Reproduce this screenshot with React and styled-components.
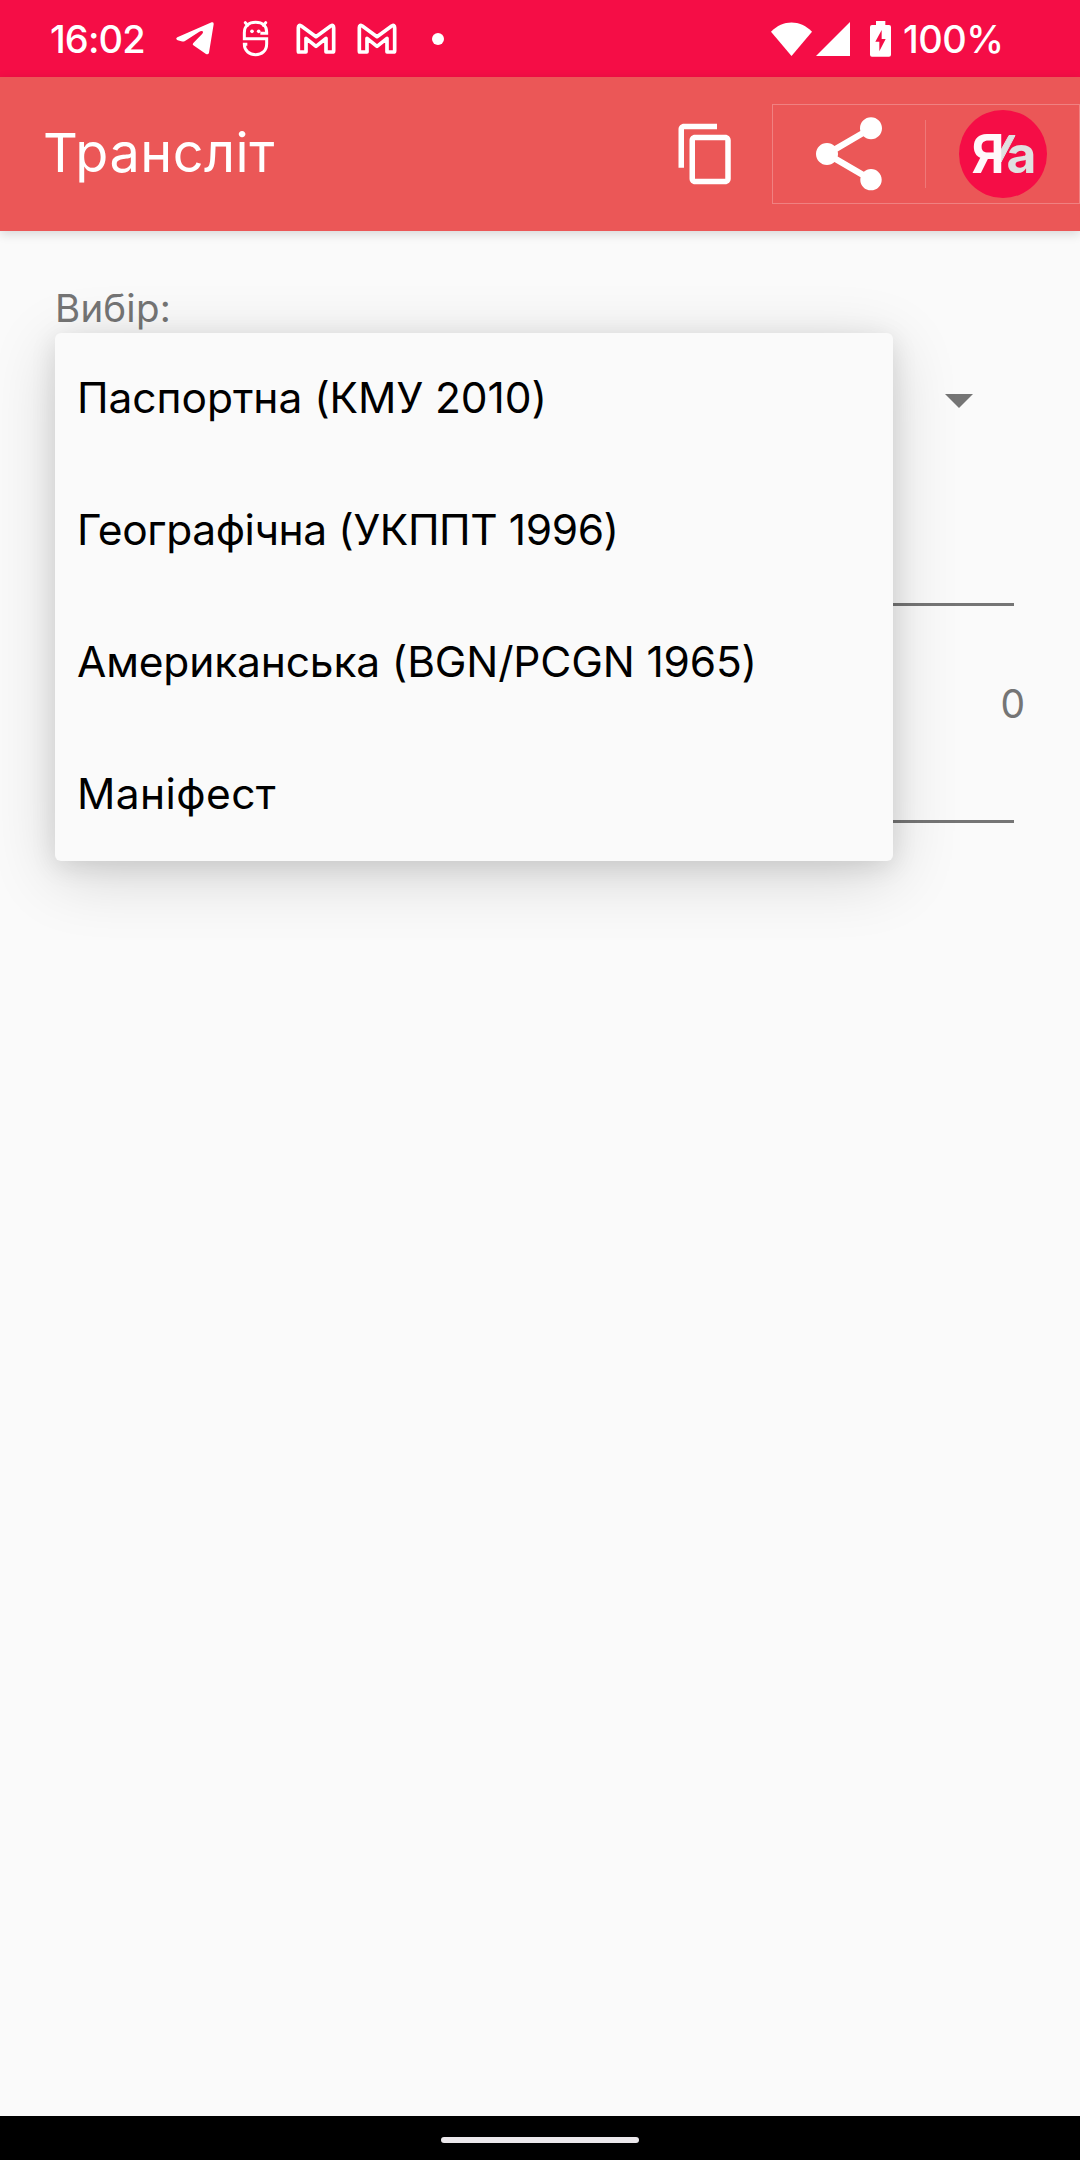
import React from "react";
import styled, { createGlobalStyle } from "styled-components";

const GlobalStyle = createGlobalStyle`
  * { box-sizing: border-box; }
  body { margin: 0; background: #fafafa; font-family: Inter, Roboto, sans-serif; }
`;

const Screen = styled.div`
  display: flex;
  flex-direction: column;
  width: 1080px;
  height: 2160px;
  background: #fafafa;
  overflow: hidden;
`;

const StatusBar = styled.header`
  display: flex;
  align-items: center;
  flex: none;
  height: 77px;
  padding: 0 79px 0 50px;
  background: #f50d46;
  color: #fff;
`;

const StatusText = styled.span`
  width: ${(p) => p.$width}px;
  margin-left: ${(p) => p.$gap || 0}px;
  font-size: 38px;
  line-height: 46px;
  font-weight: 500;
  letter-spacing: ${(p) => p.$spacing || 0}px;
  white-space: nowrap;
`;

const Icon = styled.svg`
  display: block;
  flex: none;
  width: ${(p) => p.$w}px;
  height: ${(p) => p.$h}px;
  margin-left: ${(p) => p.$gap || 0}px;
  fill: #fff;
  overflow: visible;
`;

const Spacer = styled.div`
  flex: 1;
`;

const Toolbar = styled.div`
  display: flex;
  align-items: center;
  flex: none;
  height: 154px;
  padding-left: 43px;
  background: #eb5757;
  color: #fff;
  box-shadow: 0 3px 10px rgba(0, 0, 0, 0.14);
`;

const Title = styled.h1`
  margin: 0;
  padding-bottom: 2px;
  font-size: 54px;
  line-height: 64px;
  font-weight: 400;
  letter-spacing: 0.5px;
`;

const ShareGroup = styled.div`
  display: flex;
  align-items: center;
  width: 308px;
  height: 100px;
  margin-left: 33px;
  border: 1px solid rgba(255, 255, 255, 0.25);
`;

const ShareButton = styled.div`
  display: flex;
  align-items: center;
  justify-content: center;
  width: 152px;
`;

const Divider = styled.div`
  width: 1px;
  height: 68px;
  background: rgba(255, 255, 255, 0.2);
`;

const Content = styled.main`
  display: flex;
  flex-direction: column;
  flex: 1;
  padding: 55px 55px 0;
`;

const Label = styled.div`
  height: 47px;
  font-size: 38.5px;
  line-height: 45px;
  letter-spacing: 0.2px;
  color: #757575;
`;

const Select = styled.div`
  position: relative;
  display: flex;
  align-items: center;
  justify-content: flex-end;
  height: 132px;
  padding: 3px 52px 0 0;
`;

const Menu = styled.ul`
  position: absolute;
  top: 0;
  left: 0;
  width: 838px;
  margin: 0;
  padding: 0;
  list-style: none;
  background: #fafafa;
  border-radius: 6px;
  box-shadow: 0 15px 66px rgba(0, 0, 0, 0.16), 0 5px 26px rgba(0, 0, 0, 0.1);
`;

const MenuItem = styled.li`
  display: flex;
  align-items: center;
  height: 132px;
  padding: 0 22px 3px;
  font-size: 42.5px;
  letter-spacing: ${(p) => p.$spacing}px;
  color: #000;
  white-space: nowrap;
`;

const Field = styled.div`
  height: ${(p) => p.$h}px;
  margin: 0 11px;
  border-bottom: 3px solid #757575;
`;

const Counter = styled.div`
  align-self: flex-end;
  height: 50px;
  margin-top: 73px;
  margin-bottom: 1px;
  font-size: 39px;
  line-height: 50px;
  color: #757575;
`;

const NavBar = styled.footer`
  display: flex;
  align-items: center;
  justify-content: center;
  flex: none;
  height: 44px;
  padding-top: 4px;
  background: #000;
`;

const NavPill = styled.div`
  width: 198px;
  height: 6px;
  border-radius: 3px;
  background: #ebe8ec;
`;

const schemes = [
  { name: "Паспортна (КМУ 2010)", spacing: -0.05 },
  { name: "Географічна (УКППТ 1996)", spacing: -0.4 },
  { name: "Американська (BGN/PCGN 1965)", spacing: -0.16 },
  { name: "Маніфест", spacing: 0.4 },
];

function GmailIcon({ gap }) {
  return (
    <Icon $w={38} $h={30} $gap={gap} viewBox="0 0 114 90">
      <path
        d="M5 84H27V43L57 67L87 43V84H106Q110 84 110 80V11Q110 1 101 6L57 38L13 6Q4 1 4 11V80Q4 84 5 84Z"
        fill="none"
        stroke="#fff"
        strokeWidth="11"
        strokeLinejoin="round"
      />
    </Icon>
  );
}

function NotificationIcons() {
  return (
    <>
      <Icon $w={38} $h={33} viewBox="0 0 114 99">
        <path d="M107 1Q114 -1 113 7L99 92Q97 99 90 96L52 70Q48 67 52 63L79 35Q83 31 80 28Q76 25 70 29L27 57Q22 60 16 58L5 55Q-3 51 4 46Z" />
      </Icon>
      <Icon $w={25} $h={35} $gap={29} viewBox="0 0 75 105">
        <g fill="none" stroke="#fff" strokeWidth="9">
          <path d="M52 37H71V33C71 15 59 4 38 4S4 15 4 35V53H71V68C71 90 56 101 38 101S4 90 4 70H13" />
          <path d="M7 5L14 13M68 5L61 13" strokeLinecap="round" />
        </g>
        <circle cx="27" cy="31" r="5.500" />
        <circle cx="47" cy="31" r="5.500" />
      </Icon>
      <GmailIcon gap={29} />
      <GmailIcon gap={23} />
      <Icon $w={12} $h={12} $gap={36} viewBox="0 0 12 12">
        <circle cx="6" cy="6" r="6" />
      </Icon>
    </>
  );
}

function SystemIcons() {
  return (
    <>
      <Icon $w={41} $h={34} viewBox="0 0 123 102">
        <path d="M0 29C36 -8 87 -8 123 29L61.500 102Z" />
      </Icon>
      <Icon $w={34} $h={34} $gap={4} viewBox="0 0 102 102">
        <path d="M102 0V102H0Z" />
      </Icon>
      <Icon $w={21} $h={36} $gap={20} viewBox="0 0 63 108">
        <path
          fillRule="evenodd"
          d="M18 0H46V12H57Q63 12 63 18V101Q63 107 57 107H6Q0 107 0 101V18Q0 12 6 12H18ZM35 27L16 62H28V91L47 54H35Z"
        />
      </Icon>
    </>
  );
}

function Logo() {
  return (
    <Icon $w={88} $h={88} $gap={33} viewBox="0 0 88 88">
      <circle cx="44" cy="44" r="44" fill="#f50d46" />
      <path d="M50 25.500H56L42 52V40Z" fill="#e0e0e0" stroke="#e0e0e0" strokeLinejoin="round" />
      <g fontFamily="Inter, Roboto, sans-serif" fontWeight="700">
        <text x="47.500" y="63" fontSize="52" textLength="30" lengthAdjust="spacingAndGlyphs" fill="#e0e0e0">
          а
        </text>
        <text x="12.500" y="63" fontSize="53" textLength="33" lengthAdjust="spacingAndGlyphs" fill="#fff7fa">
          Я
        </text>
      </g>
    </Icon>
  );
}

export default function App() {
  return (
    <>
      <GlobalStyle />
      <Screen>
        <StatusBar>
          <StatusText $width={126} $spacing={-0.9}>16:02</StatusText>
          <NotificationIcons />
          <Spacer />
          <SystemIcons />
          <StatusText $width={98} $gap={12} $spacing={-0.5}>100%</StatusText>
        </StatusBar>
        <Toolbar>
          <Title>Трансліт</Title>
          <Spacer />
          <Icon $w={66} $h={66} viewBox="0 0 24 24">
            <path d="M16 1H4c-1.100 0-2 .9-2 2v14h2V3h12V1zm3 4H8c-1.100 0-2 .9-2 2v14c0 1.100.9 2 2 2h11c1.100 0 2-.9 2-2V7c0-1.100-.9-2-2-2zm0 16H8V7h11v14z" />
          </Icon>
          <ShareGroup>
            <ShareButton>
              <Icon $w={88} $h={88} viewBox="0 0 24 24">
                <path d="M18 16.080c-.76 0-1.440.3-1.960.77L8.910 12.700c.05-.23.09-.46.09-.7s-.04-.47-.09-.7l7.050-4.110c.54.5 1.250.81 2.040.81 1.660 0 3-1.340 3-3s-1.340-3-3-3-3 1.340-3 3c0 .24.04.47.09.7L8.040 9.810C7.500 9.310 6.790 9 6 9c-1.660 0-3 1.340-3 3s1.340 3 3 3c.79 0 1.500-.31 2.040-.81l7.120 4.160c-.05.21-.08.43-.08.65 0 1.610 1.310 2.920 2.920 2.920s2.920-1.310 2.920-2.920-1.310-2.920-2.920-2.920z" />
              </Icon>
            </ShareButton>
            <Divider />
            <Logo />
          </ShareGroup>
        </Toolbar>
        <Content>
          <Label>Вибір:</Label>
          <Select>
            <Icon $w={28} $h={14} viewBox="0 0 28 14">
              <path d="M0 0H28L14 14Z" fill="#757575" />
            </Icon>
            <Menu>
              {schemes.map((s) => (
                <MenuItem key={s.name} $spacing={s.spacing}>
                  {s.name}
                </MenuItem>
              ))}
            </Menu>
          </Select>
          <Field $h={141} />
          <Counter>0</Counter>
          <Field $h={93} />
        </Content>
        <NavBar>
          <NavPill />
        </NavBar>
      </Screen>
    </>
  );
}
